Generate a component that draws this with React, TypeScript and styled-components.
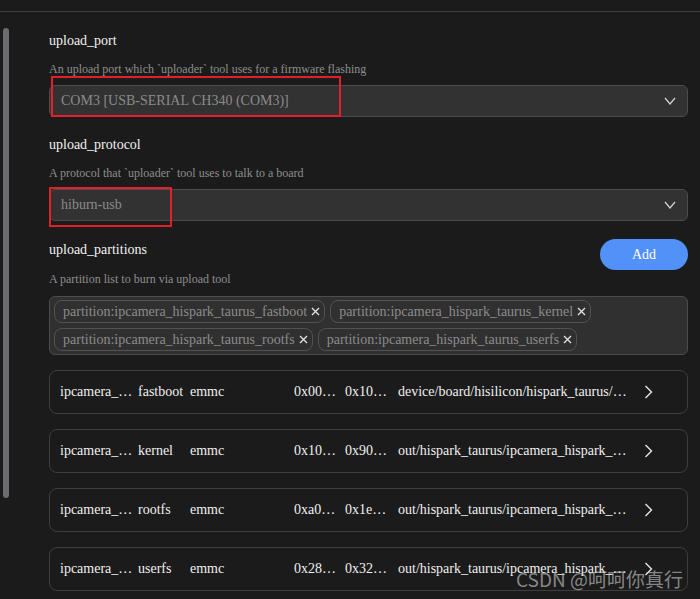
import * as React from 'react'
import styled, { createGlobalStyle } from 'styled-components'

const GlobalStyle = createGlobalStyle`
  html, body {
    margin: 0;
    padding: 0;
    background: #1b1b1b;
    height: 599px;
    overflow: hidden;
  }
  body {
    font-family: "Liberation Serif", "Times New Roman", serif;
  }
`

const Page = styled.div`
  width: 700px;
  height: 599px;
  background: #1b1b1b;
  position: relative;
  overflow: hidden;
`

const TopBar = styled.div`
  height: 11px;
  border-bottom: 1px solid #3e3e3e;
`

const Body = styled.div`
  display: flex;
`

const ScrollTrack = styled.div`
  width: 46px;
  padding: 16px 0 0 3px;
`

const ScrollThumb = styled.div`
  width: 6px;
  height: 470px;
  border-radius: 3px;
  background: #6c6c6f;
`

const Content = styled.div`
  width: 639px;
  padding-top: 19px;
`

const Field = styled.section`
  & + & {
    margin-top: 18px;
  }
`

const Label = styled.div<{ $nudge?: number }>`
  color: #f2f2f2;
  font-size: 14px;
  line-height: 20px;
  margin-top: ${p => p.$nudge || 0}px;
`

const Desc = styled.div<{ $gap?: number }>`
  color: #8e8e8e;
  font-size: 12px;
  line-height: 18px;
  margin-top: ${p => (p.$gap === undefined ? 9 : p.$gap)}px;
`

const SelectWrap = styled.div`
  position: relative;
  margin-top: 7px;
`

const Select = styled.div`
  box-sizing: border-box;
  height: 32px;
  display: flex;
  align-items: center;
  justify-content: space-between;
  padding: 0 11px 0 11px;
  background: #323232;
  border: 1px solid #4c4c4c;
  border-radius: 6px;
  color: #8b8b8b;
  font-size: 14px;
`

const Mark = styled.div<{ $left: number; $top: number; $w: number; $h: number }>`
  position: absolute;
  left: ${p => p.$left}px;
  top: ${p => p.$top}px;
  width: ${p => p.$w}px;
  height: ${p => p.$h}px;
  box-sizing: border-box;
  border: 2px solid #e3202a;
  pointer-events: none;
`

const HeadRow = styled.div`
  display: flex;
  justify-content: space-between;
  align-items: flex-start;
`

const AddButton = styled.button`
  width: 88px;
  height: 31px;
  border: none;
  border-radius: 16px;
  background: #5291f8;
  color: #ffffff;
  font-family: "Liberation Serif", "Times New Roman", serif;
  font-size: 14px;
  padding: 0;
`

const TagBox = styled.div`
  box-sizing: border-box;
  margin-top: 8px;
  display: flex;
  flex-wrap: wrap;
  gap: 5px;
  padding: 3px 4px;
  background: #303030;
  border: 1px solid #4c4c4c;
  border-radius: 6px;
`

const Tag = styled.div`
  box-sizing: border-box;
  height: 23px;
  display: inline-flex;
  align-items: center;
  gap: 4px;
  padding: 0 4px 0 8px;
  border: 1px solid #525252;
  border-radius: 8px;
  color: #8c8c8c;
  font-size: 14px;
  white-space: nowrap;
`

const Rows = styled.div`
  margin-top: 15px;
  display: flex;
  flex-direction: column;
  gap: 15px;
`

const Row = styled.div`
  box-sizing: border-box;
  height: 44px;
  display: grid;
  grid-template-columns: 74px 48px 100px 47px 45px 236px 28px;
  column-gap: 4px;
  align-items: center;
  padding-left: 10px;
  border: 1px solid #3e3e3e;
  border-radius: 8px;
  color: #f0f0f0;
  font-size: 14px;
`

const Cell = styled.span<{ $indent?: number }>`
  overflow: hidden;
  white-space: nowrap;
  text-overflow: ellipsis;
  padding-left: ${p => p.$indent || 0}px;
`

const Go = styled.span`
  display: flex;
  justify-content: center;
`

const Watermark = styled.div`
  position: absolute;
  right: 17px;
  bottom: 7px;
  font-family: "Noto Sans CJK SC", "Noto Sans", sans-serif;
  font-size: 19px;
  color: rgba(205, 205, 205, 0.62);
  white-space: nowrap;
`

const ChevronDown = () => (
  <svg width="12" height="8" viewBox="0 0 12 8">
    <polyline points="1,1 6,7 11,1" fill="none" stroke="#cfcfcf" strokeWidth="1.3" />
  </svg>
)

const ChevronRight = () => (
  <svg width="9" height="14" viewBox="0 0 9 14">
    <polyline points="1.5,1 7.5,7 1.5,13" fill="none" stroke="#e6e6e6" strokeWidth="1.4" />
  </svg>
)

const Cross = () => (
  <svg width="9" height="9" viewBox="0 0 9 9">
    <path d="M1 1 L8 8 M8 1 L1 8" stroke="#e0e0e0" strokeWidth="1.4" />
  </svg>
)

const tags = [
  'partition:ipcamera_hispark_taurus_fastboot',
  'partition:ipcamera_hispark_taurus_kernel',
  'partition:ipcamera_hispark_taurus_rootfs',
  'partition:ipcamera_hispark_taurus_userfs',
]

const partitions = [
  ['ipcamera_hispark_taurus', 'fastboot', 'emmc', '0x000000', '0x100000', 'device/board/hisilicon/hispark_taurus/uboot/out/boot/u-boot-hi3516dv300_emmc.bin'],
  ['ipcamera_hispark_taurus', 'kernel', 'emmc', '0x100000', '0x900000', 'out/hispark_taurus/ipcamera_hispark_taurus/OHOS_Image.bin'],
  ['ipcamera_hispark_taurus', 'rootfs', 'emmc', '0xa00000', '0x1e00000', 'out/hispark_taurus/ipcamera_hispark_taurus/rootfs_vfat.img'],
  ['ipcamera_hispark_taurus', 'userfs', 'emmc', '0x2800000', '0x3200000', 'out/hispark_taurus/ipcamera_hispark_taurus/userfs_vfat.img'],
]

export default function App() {
  return (
    <Page>
      <GlobalStyle />
      <TopBar />
      <Body>
        <ScrollTrack>
          <ScrollThumb />
        </ScrollTrack>
        <Content>
          <Field>
            <Label>upload_port</Label>
            <Desc>An upload port which `uploader` tool uses for a firmware flashing</Desc>
            <SelectWrap>
              <Select>
                <span>COM3 [USB-SERIAL CH340 (COM3)]</span>
                <ChevronDown />
              </Select>
              <Mark $left={2} $top={-9} $w={290} $h={41} />
            </SelectWrap>
          </Field>

          <Field>
            <Label>upload_protocol</Label>
            <Desc>A protocol that `uploader` tool uses to talk to a board</Desc>
            <SelectWrap>
              <Select>
                <span>hiburn-usb</span>
                <ChevronDown />
              </Select>
              <Mark $left={0} $top={-2} $w={123} $h={40} />
            </SelectWrap>
          </Field>

          <Field>
            <HeadRow>
              <Label $nudge={1}>upload_partitions</Label>
              <AddButton>Add</AddButton>
            </HeadRow>
            <Desc $gap={0}>A partition list to burn via upload tool</Desc>
            <TagBox>
              {tags.map(t => (
                <Tag key={t}>
                  {t}
                  <Cross />
                </Tag>
              ))}
            </TagBox>
            <Rows>
              {partitions.map(p => (
                <Row key={p[1]}>
                  {p.map((v, i) => (
                    <Cell key={i} $indent={i === 5 ? 4 : 0}>{v}</Cell>
                  ))}
                  <Go>
                    <ChevronRight />
                  </Go>
                </Row>
              ))}
            </Rows>
          </Field>
        </Content>
      </Body>
      <Watermark>CSDN @呵呵你真行</Watermark>
    </Page>
  )
}
